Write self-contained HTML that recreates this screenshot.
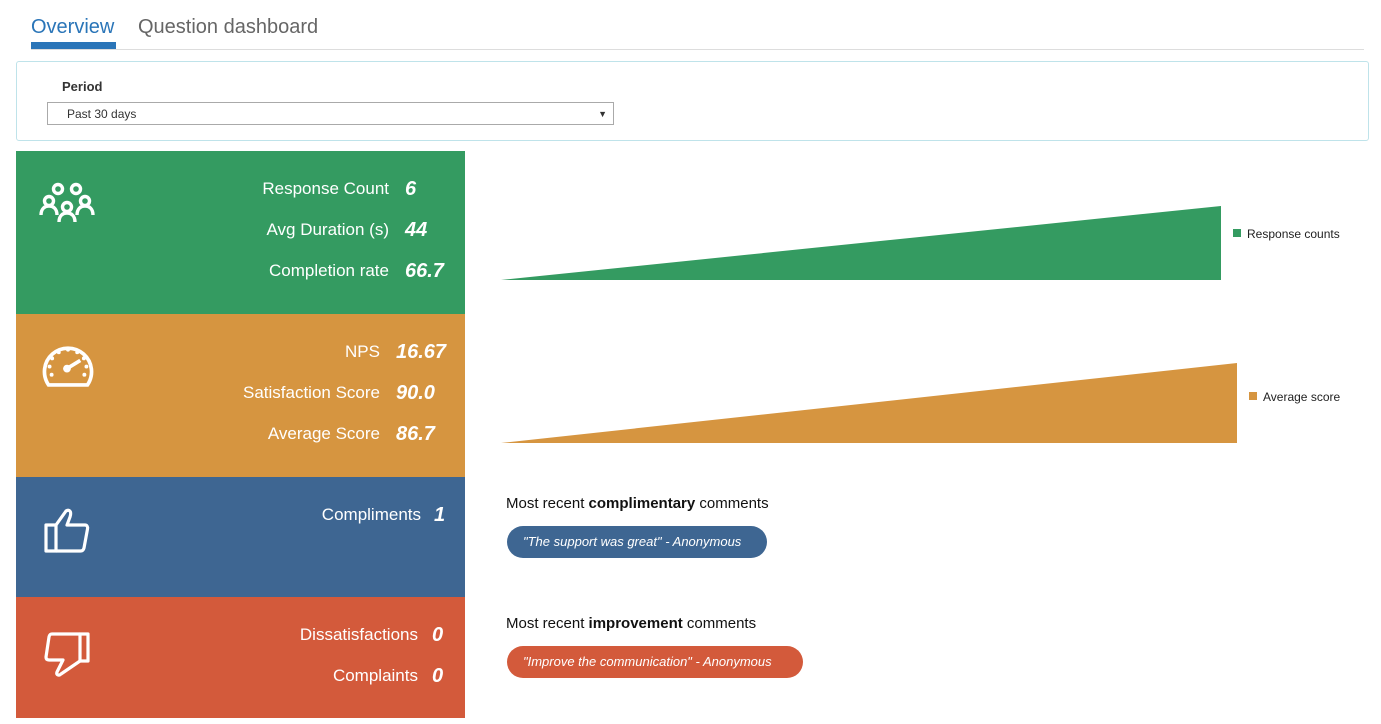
<!DOCTYPE html>
<html><head><meta charset="utf-8"><style>
*{margin:0;padding:0;box-sizing:border-box}
body{width:1381px;height:724px;background:#fff;font-family:"Liberation Sans",sans-serif;position:relative;overflow:hidden}
.abs{position:absolute}
.tab{font-size:20px;top:16px}
.panel{position:absolute;left:16px;width:449px}
.lbl{position:absolute;color:#fff;font-size:17px;text-align:right;white-space:nowrap}
.val{position:absolute;color:#fff;font-size:20px;font-weight:bold;font-style:italic;white-space:nowrap}
.pill{position:absolute;height:32px;border-radius:16px;color:#fff;font-style:italic;font-size:13px;line-height:32px;padding-left:16px}
.cm{position:absolute;left:506px;font-size:15px;color:#111}
</style></head><body>
<div class="abs tab" style="left:31px;color:#2a75b8">Overview</div>
<div class="abs" style="left:31px;top:42px;width:85px;height:7px;background:#2a75b8"></div>
<div class="abs tab" style="left:138px;color:#666">Question dashboard</div>
<div class="abs" style="left:31px;top:49px;width:1333px;height:1px;background:#ddd"></div>

<div class="abs" style="left:16px;top:61px;width:1353px;height:80px;border:1px solid #bfe3ea;border-radius:3px"></div>
<div class="abs" style="left:62px;top:79px;font-size:13px;font-weight:bold;color:#333">Period</div>
<div class="abs" style="left:47px;top:102px;width:567px;height:23px;border:1px solid #aaa;font-size:12px;color:#333;padding-left:19px;line-height:22px">Past 30 days<span style="position:absolute;right:6px;top:0;font-size:9px">▼</span></div>

<div class="panel" style="top:151px;height:163px;background:#349b61">
<svg class="abs" style="left:23px;top:31px" width="58" height="42" viewBox="0 0 58 42" fill="none" stroke="#fff" stroke-width="3.4">
<circle cx="19" cy="7" r="4.5"/><circle cx="37" cy="7" r="4.5"/>
<circle cx="10" cy="19" r="4.5"/><path d="M2 33c0-6 3.5-9 8-9s8 3 8 9"/>
<circle cx="46" cy="19" r="4.5"/><path d="M38 33c0-6 3.5-9 8-9s8 3 8 9"/>
<circle cx="28" cy="25" r="4.5"/><path d="M20 40c0-6 3.5-9 8-9s8 3 8 9"/>
</svg>
<div class="lbl" style="right:76px;top:28px">Response Count</div><div class="val" style="left:389px;top:27px">6</div>
<div class="lbl" style="right:76px;top:69px">Avg Duration (s)</div><div class="val" style="left:389px;top:68px">44</div>
<div class="lbl" style="right:76px;top:110px">Completion rate</div><div class="val" style="left:389px;top:109px">66.7</div>
</div>

<div class="panel" style="top:314px;height:163px;background:#d69540">
<svg class="abs" style="left:26px;top:29px" width="52" height="44" viewBox="0 0 50 43" fill="none" stroke="#fff" stroke-width="3.6">
<path d="M6 41a23 23 0 1 1 38 0Z"/>
<g fill="#fff" stroke="none"><circle cx="25" cy="6.5" r="1.9"/><circle cx="16" cy="9" r="1.9"/><circle cx="34" cy="9" r="1.9"/><circle cx="9.5" cy="15" r="1.9"/><circle cx="40.5" cy="15" r="1.9"/><circle cx="7" cy="23" r="1.9"/><circle cx="43" cy="23" r="1.9"/><circle cx="9" cy="31" r="1.9"/><circle cx="41" cy="31" r="1.9"/><circle cx="24" cy="25" r="3.8"/></g>
<path d="M24 25l13-8"/>
</svg>
<div class="lbl" style="right:85px;top:28px">NPS</div><div class="val" style="left:380px;top:27px">16.67</div>
<div class="lbl" style="right:85px;top:69px">Satisfaction Score</div><div class="val" style="left:380px;top:68px">90.0</div>
<div class="lbl" style="right:85px;top:110px">Average Score</div><div class="val" style="left:380px;top:109px">86.7</div>
</div>

<div class="panel" style="top:477px;height:120px;background:#3e6692">
<svg class="abs" style="left:28px;top:30px" width="48" height="48" viewBox="0 0 48 48" fill="none" stroke="#fff" stroke-width="3.2" stroke-linejoin="round">
<rect x="2" y="18" width="10" height="26"/>
<path d="M12 18l10-14c3-2 6 0 4 6l-3 8h18c2 0 3 2 2.5 4l-3.5 19c-0.5 2-1.5 3-3.5 3H12"/>
</svg>
<div class="lbl" style="right:44px;top:28px">Compliments</div><div class="val" style="left:418px;top:27px">1</div>
</div>

<div class="panel" style="top:597px;height:121px;background:#d35a3b">
<svg class="abs" style="left:28px;top:34px" width="48" height="48" viewBox="0 0 48 48" fill="none" stroke="#fff" stroke-width="3.2" stroke-linejoin="round">
<rect x="36" y="3" width="8" height="27"/>
<path d="M36 3H8c-2 0-2.5 1-3 3L2 26c0 2 1 3 3 3h14l-6 12c-1 3 2 4 4 2l19-13"/>
</svg>
<div class="lbl" style="right:47px;top:28px">Dissatisfactions</div><div class="val" style="left:416px;top:27px">0</div>
<div class="lbl" style="right:47px;top:69px">Complaints</div><div class="val" style="left:416px;top:68px">0</div>
</div>

<svg class="abs" style="left:0;top:0" width="1381" height="724">
<polygon points="501,280 1221,206 1221,280" fill="#349b61"/>
<polygon points="501,443 1237,363 1237,443" fill="#d69540"/>
<rect x="1233" y="229" width="8" height="8" fill="#349b61"/>
<rect x="1249" y="392" width="8" height="8" fill="#d69540"/>
<text x="1247" y="238" font-family="Liberation Sans" font-size="12" fill="#222">Response counts</text>
<text x="1263" y="401" font-family="Liberation Sans" font-size="12" fill="#222">Average score</text>
</svg>

<div class="cm" style="top:495px">Most recent <b>complimentary</b> comments</div>
<div class="pill" style="left:507px;top:526px;width:260px;background:#3e6692">"The support was great" - Anonymous</div>
<div class="cm" style="top:615px">Most recent <b>improvement</b> comments</div>
<div class="pill" style="left:507px;top:646px;width:296px;background:#d35a3b">"Improve the communication" - Anonymous</div>
</body></html>
